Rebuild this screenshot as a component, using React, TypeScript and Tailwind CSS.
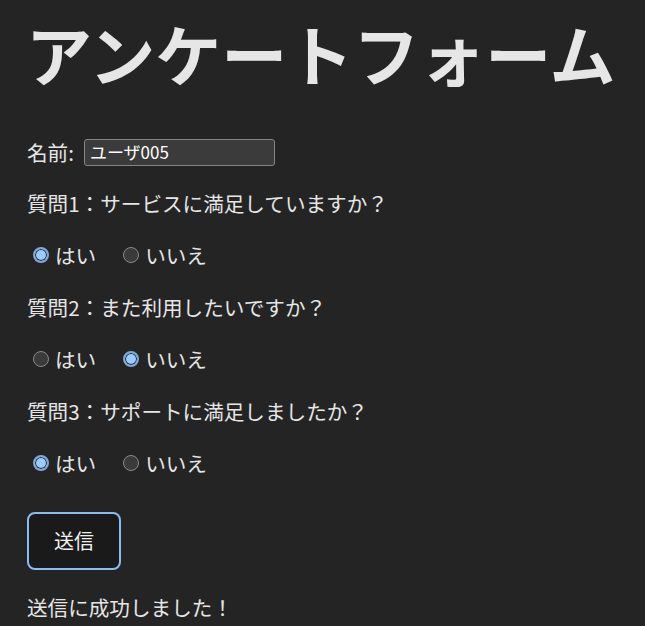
const font = { fontFamily: '"Noto Sans CJK JP", "Noto Sans", sans-serif' };

const Radio = ({ checked, label }: { checked: boolean; label: string }) => (
  <label className="flex items-center gap-[6px]">
    {checked ? (
      <span className="w-[16px] h-[16px] rounded-full border-[2px] border-[#7fa9dc] bg-[#9ecbff] shadow-[inset_0_0_0_1px_#242424]" />
    ) : (
      <span className="w-[16px] h-[16px] rounded-full border border-[#8a8a8a] bg-[#3b3b3b]" />
    )}
    <span>{label}</span>
  </label>
);

const Question = ({ title, yes }: { title: string; yes: boolean }) => (
  <>
    <p className="h-[52px] flex items-center">{title}</p>
    <div className="h-[52px] flex items-center gap-[27px] pl-[6px]">
      <Radio checked={yes} label="はい" />
      <Radio checked={!yes} label="いいえ" />
    </div>
  </>
);

export default function App() {
  return (
    <div className="min-h-[626px] bg-[#242424] text-[#e6e6e6] px-[27px] overflow-hidden" style={font}>
      <h1 className="text-[66px] font-semibold leading-none pt-[19px] h-[127px] whitespace-nowrap -ml-[1px]">
        アンケートフォーム
      </h1>
      <div className="text-[20.6px]">
        <div className="h-[50px] flex items-center gap-[10px]">
          <span>名前:</span>
          <div className="w-[191px] h-[27px] bg-[#3b3b3b] border border-[#858585] rounded-[3px] flex items-center px-[5px] text-[17px] text-white">
            ユーザ005
          </div>
        </div>
        <Question title="質問1：サービスに満足していますか？" yes={true} />
        <Question title="質問2：また利用したいですか？" yes={false} />
        <Question title="質問3：サポートに満足しましたか？" yes={true} />
        <div className="pt-[23px]">
          <button className="w-[94px] h-[58px] rounded-[8px] border-[2px] border-[#8bbcf0] bg-[#1a1a1a] text-[20px] text-[#f0f0f0]">
            送信
          </button>
        </div>
        <p className="mt-[22px]">送信に成功しました！</p>
      </div>
    </div>
  );
}
